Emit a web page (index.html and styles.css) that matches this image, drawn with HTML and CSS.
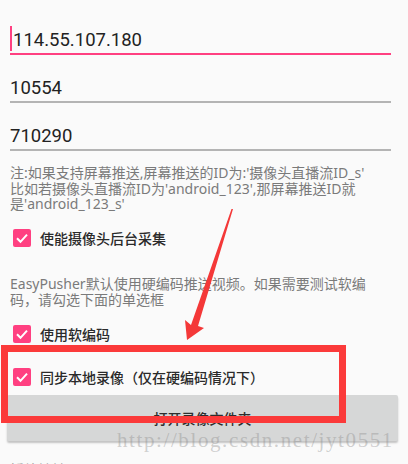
FILE: index.html
```html
<!DOCTYPE html>
<html lang="zh">
<head>
<meta charset="utf-8">
<link rel="stylesheet" href="styles.css">
</head>
<body>
<div class="page">
  <div class="field focused"><span class="caret"></span>114.55.107.180</div>
  <div class="field">10554</div>
  <div class="field">710290</div>
  <p class="note">注:如果支持屏幕推送,屏幕推送的ID为:'摄像头直播流ID_s'<br>比如若摄像头直播流ID为'android_123',那屏幕推送ID就<br>是'android_123_s'</p>
  <label class="check row1"><span class="box"><svg width="18" height="18" viewBox="0 0 18 18"><polyline points="4,9.3 7.5,12.8 14,5.6" fill="none" stroke="#fff" stroke-width="2"/></svg></span>使能摄像头后台采集</label>
  <p class="note info">EasyPusher默认使用硬编码推送视频。如果需要测试软编<br>码，请勾选下面的单选框</p>
  <label class="check row2"><span class="box"><svg width="18" height="18" viewBox="0 0 18 18"><polyline points="4,9.3 7.5,12.8 14,5.6" fill="none" stroke="#fff" stroke-width="2"/></svg></span>使用软编码</label>
  <label class="check row3"><span class="box"><svg width="18" height="18" viewBox="0 0 18 18"><polyline points="4,9.3 7.5,12.8 14,5.6" fill="none" stroke="#fff" stroke-width="2"/></svg></span>同步本地录像（仅在硬编码情况下）</label>
  <div class="button">打开录像文件夹</div>
  <p class="note cut">播放地址</p>
</div>
<div class="highlight"></div>
<svg class="arrow" width="408" height="464" viewBox="0 0 408 464"><polygon points="233,209 198,326 204,328 187,340 185,320 191,325 231.5,209" fill="#f43838"/></svg>
<div class="watermark">http://blog.csdn.net/jyt0551</div>
</body>
</html>
```

FILE: styles.css
```css
html, body {
  margin: 0;
  padding: 0;
  background: #fafafa;
  overflow: hidden;
  height: 464px;
}
body {
  font-family: Roboto, "Noto Sans CJK SC", sans-serif;
  position: relative;
}
.page {
  display: flex;
  flex-direction: column;
  padding: 7px 17px 0 10px;
}
.field {
  display: flex;
  align-items: center;
  padding-top: 21px;
  padding-bottom: 1px;
  height: 24px;
  font-size: 18.5px;
  line-height: 24px;
  color: #222;
  border-bottom: 2px solid #b4b4b4;
}
.field.focused {
  border-bottom-color: #ff4081;
}
.caret {
  display: inline-block;
  width: 2px;
  height: 25px;
  background: #ff4081;
  margin-right: 1px;
  margin-top: -3px;
}
.note {
  margin: 14px 0 0 0;
  font-family: "Noto Sans", "Noto Sans CJK SC", sans-serif;
  font-size: 14px;
  line-height: 15.5px;
  color: #7a7a7a;
  white-space: nowrap;
}
.note.info {
  margin-top: 22px;
  line-height: 16px;
}
.check {
  display: flex;
  align-items: center;
  height: 32px;
  font-size: 14px;
  color: #2a2a2a;
  font-weight: 500;
}
.row1 { margin-top: 10px; }
.row2 { margin-top: 10px; }
.row3 { margin-top: 11px; }
.box {
  width: 18px;
  height: 18px;
  margin-left: 3px;
  margin-right: 9px;
  border-radius: 2px;
  background: #ff4081;
  display: flex;
}
.button {
  margin: 2px -7px 0 -3px;
  height: 46px;
  background: #d6d7d7;
  border-radius: 2px;
  box-shadow: 0 2px 2px rgba(0,0,0,0.22);
  display: flex;
  align-items: center;
  justify-content: center;
  font-size: 14px;
  color: #2e2e2e;
  font-weight: 500;
}
.note.cut {
  margin-top: 21px;
  color: #9a9a9a;
}
.highlight {
  position: absolute;
  left: 1px;
  top: 345px;
  width: 331px;
  height: 64px;
  border: 7px solid #fb3a3a;
}
.arrow {
  position: absolute;
  left: 0;
  top: 0;
}
.watermark {
  position: absolute;
  left: 117px;
  top: 428px;
  font-family: "Liberation Serif", serif;
  font-size: 21px;
  letter-spacing: 1.6px;
  color: rgba(140,140,140,0.4);
  white-space: nowrap;
}
```
